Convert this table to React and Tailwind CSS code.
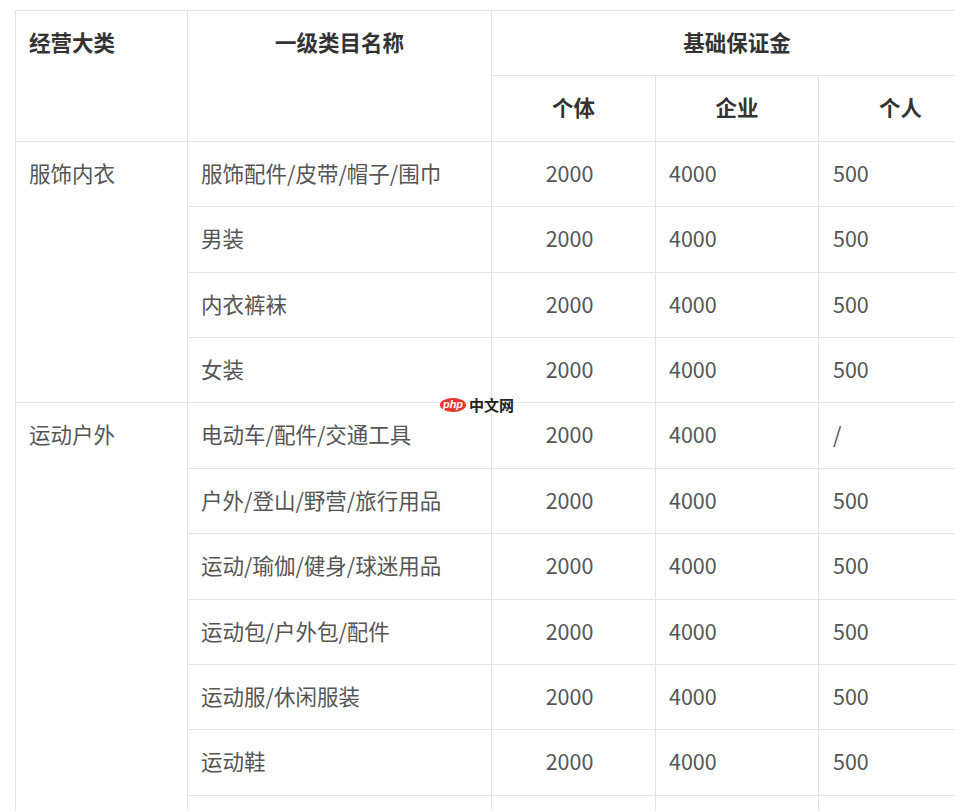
import React from "react";

const font = { fontFamily: '"Noto Sans CJK SC", "Noto Sans", sans-serif' };

const groups = [
  {
    name: "服饰内衣",
    items: [
      ["服饰配件/皮带/帽子/围巾", "2000", "4000", "500"],
      ["男装", "2000", "4000", "500"],
      ["内衣裤袜", "2000", "4000", "500"],
      ["女装", "2000", "4000", "500"],
    ],
  },
  {
    name: "运动户外",
    items: [
      ["电动车/配件/交通工具", "2000", "4000", "/"],
      ["户外/登山/野营/旅行用品", "2000", "4000", "500"],
      ["运动/瑜伽/健身/球迷用品", "2000", "4000", "500"],
      ["运动包/户外包/配件", "2000", "4000", "500"],
      ["运动服/休闲服装", "2000", "4000", "500"],
      ["运动鞋", "2000", "4000", "500"],
      // next row starts at the bottom edge, its text is below the fold
      ["", "", "", ""],
    ],
  },
];

const Cell = ({ className = "", children, style }) => (
  <div className={"border-r border-b border-[#e3e3e3] leading-[61px] " + className} style={style}>
    {children}
  </div>
);

const App = () => {
  let row = 3;
  return (
    <div className="relative h-[811px] w-full overflow-hidden bg-white" style={font}>
      <div className="pl-[15px] pt-[10px]">
        <div className="grid w-[967px] grid-cols-[172px_304px_164px_163px_164px] grid-rows-[repeat(13,65.4px)] border-t border-l border-[#e3e3e3] text-[21.5px] text-[#555]">
          {/* header */}
          <Cell className="row-span-2 px-[13px] font-bold text-[#333]">经营大类</Cell>
          <Cell className="row-span-2 text-center font-bold text-[#333]">一级类目名称</Cell>
          <Cell className="col-span-3 text-center font-bold text-[#333]">基础保证金</Cell>
          <Cell className="text-center font-bold text-[#333]">个体</Cell>
          <Cell className="text-center font-bold text-[#333]">企业</Cell>
          <Cell className="text-center font-bold text-[#333]">个人</Cell>

          {groups.map((g) => {
            const start = row;
            row += g.items.length;
            return (
              <React.Fragment key={g.name}>
                <Cell
                  className="col-start-1 px-[13px]"
                  style={{ gridRow: `${start} / span ${g.items.length}` }}
                >
                  {g.name}
                </Cell>
                {g.items.map(([name, a, b, c], i) => (
                  <React.Fragment key={i}>
                    <Cell className="col-start-2 px-[13px] whitespace-nowrap">{name}</Cell>
                    <Cell className="pr-[8px] text-center">{a}</Cell>
                    <Cell className="px-[13px]">{b}</Cell>
                    <Cell className="px-[14px]">{c}</Cell>
                  </React.Fragment>
                ))}
              </React.Fragment>
            );
          })}
        </div>
      </div>

      {/* watermark */}
      <div className="absolute left-[440px] top-[397px] flex items-center gap-[3px]">
        <div className="flex h-[14px] w-[26px] items-center justify-center rounded-[50%] bg-[#e8352e]">
          <span className="text-[11px] italic font-bold leading-none text-white" style={{ fontFamily: '"Liberation Sans", sans-serif' }}>
            php
          </span>
        </div>
        <span className="text-[15px] font-bold leading-none text-[#222]">中文网</span>
      </div>
    </div>
  );
};

export default App;
